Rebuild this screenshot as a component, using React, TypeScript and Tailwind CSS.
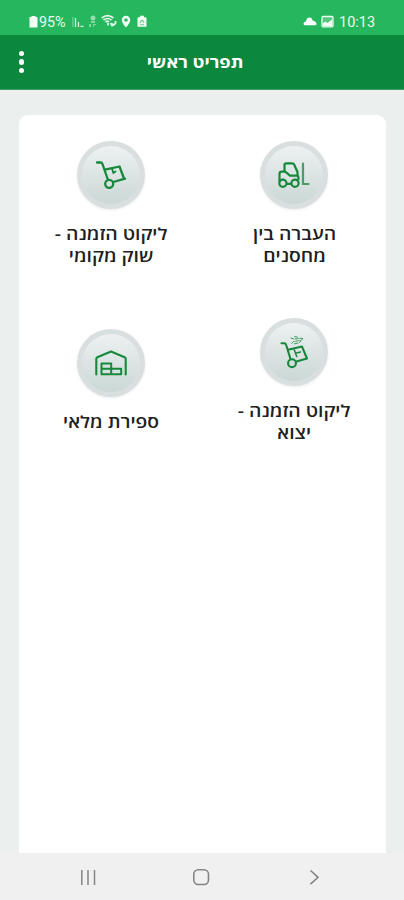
import React from "react";

const green = "#16883b";

function Forklift() {
  return (
    <svg width="58" height="58" viewBox="5 5 58 58" fill="none" stroke={green} strokeWidth="2.2" strokeLinejoin="round" strokeLinecap="round">
      <path d="M24.500 30.700V24q0-1.700 1.700-1.700h6q1.300 0 1.900 1.200L37.500 31v3.500M19.500 40v-7q0-2.300 2.300-2.300h3.400l4.800 4h6.500q1.900 0 1.900 1.900v2M27 42.800h4" />
      <circle cx="22.900" cy="42.300" r="3.600" />
      <circle cx="35" cy="42.300" r="3.600" />
      <path d="M43 22.500V43h5.500" stroke="#4c9c69" />
    </svg>
  );
}

function Dolly() {
  return (
    <svg width="58" height="58" viewBox="5 5 58 58" fill="none" stroke={green} strokeWidth="2.3" strokeLinejoin="round" strokeLinecap="round">
      <path d="M20 21.500h3.500q1.500 0 2 1.500L31 39" />
      <path d="M28 28.600L42.500 25.500 47 37.500M36.300 41L48 37.700" />
      <path d="M35 27.500l1.300 4.500 2.200-1.500" strokeWidth="1.800" />
      <circle cx="32.200" cy="42.800" r="4" />
    </svg>
  );
}

function ExportDolly() {
  return (
    <svg width="58" height="58" viewBox="5 5 58 58" fill="none" stroke={green} strokeWidth="2.1" strokeLinejoin="round" strokeLinecap="round">
      <path d="M21.500 25.300h2.700q1.500 0 1.900 1.500L30.500 41" />
      <path d="M28 31.800L42 28.600 47 40.500 36.500 43.500" />
      <path d="M34 31l1.500 4.300 5-1.300M35.500 35.300l1.200 3.200" strokeWidth="1.500" />
      <circle cx="32" cy="45.200" r="3.900" />
      <path d="M31 20l3.500 1.200 6-1 2.800.3-2 1.600-8 1.700-1.800 1.700M34.500 18.700l4 .5M34.500 25.800l4-.8 2-1.500" strokeWidth="1" strokeDasharray="3 1.500" opacity=".8" />
    </svg>
  );
}

function Warehouse() {
  return (
    <svg width="58" height="58" viewBox="5 5 58 58" fill="none" stroke={green} strokeWidth="2.1" strokeLinejoin="round" strokeLinecap="round">
      <path d="M19.300 45.500V30q0-1.200 1.100-1.700L34 22.500l13.600 5.800q1.100.5 1.100 1.700v15.500" />
      <path d="M24.500 34.500h9.700v5.300h-9.700zM24.500 39.800h19.700v5.400H24.500zM34.200 39.800v5.400" strokeWidth="2" />
    </svg>
  );
}

function Tile({ icon, lines }: { icon: React.ReactNode; lines: string[] }) {
  return (
    <button className="flex flex-col items-center gap-[14px]">
      <span className="block size-[68px] rounded-full bg-[#d9dfde] p-[5px] shadow-[0_1px_3px_#00000014]">
        <span className="block size-[58px] rounded-full bg-linear-to-b from-[#edf1f1] to-[#cbd8d5]">{icon}</span>
      </span>
      <span className="block scale-x-[1.17] text-center text-[16.5px] leading-[22px] font-semibold text-[#202020]">
        {lines.map((line) => (
          <span key={line} className="block whitespace-nowrap">{line}</span>
        ))}
      </span>
    </button>
  );
}

function StatusBar() {
  return (
    <div className="flex h-[35px] shrink-0 items-center bg-[#25b65e] pt-[7px] pr-[28px] pl-[29px] font-['Roboto',sans-serif] text-white">
      <svg width="9" height="13" viewBox="0 0 9 13" fill="#f3fff5"><path d="M2.500 1h4v1H8.500v10.500H.5V2h2z" /></svg>
      <span className="mt-[2px] ml-px w-[28px] text-[14.3px] leading-[14px] text-[#e9fbee]">95%</span>
      <svg className="ml-[5px]" width="12" height="13" viewBox="0 0 12 13" stroke="#d5f5de" strokeWidth="1.3"><path d="M.8 2v10" opacity=".4" /><path d="M3.500 3v9M6.500 7v5M8.500 11.300h3" /></svg>
      <svg className="ml-[4px]" width="9" height="13" viewBox="0 0 9 13" fill="#c3efcf"><circle cx="5" cy="3" r="2.500" opacity=".7" /><path d="M3 6h4v2H3zM1 9h2v3H1zM5 9h3v1H6v2H5z" opacity=".6" /></svg>
      <svg className="ml-[4px]" width="16" height="14" viewBox="0 0 16 14" fill="none" stroke="#e5fae9" strokeWidth="1.7"><path d="M.7 4Q6.500-.8 12.500 4M2.500 6Q6.500 3 10.500 6M4.500 8Q6.500 6.500 8 8" /><path d="M7 9v2.500M9.500 9l1.500 2.500 1-2M12 11.500l2.500-2.200V7" /></svg>
      <svg className="ml-[4px]" width="10" height="13" viewBox="0 0 10 13" fill="#f3fff5" fillRule="evenodd"><path d="M5 .8A4.200 4.200 0 0 0 .8 5C.8 8 5 12.500 5 12.500S9.200 8 9.200 5A4.200 4.200 0 0 0 5 .8zM5 3.200a1.800 1.800 0 1 1 0 3.600 1.800 1.800 0 0 1 0-3.600z" /></svg>
      <svg className="ml-[6px]" width="10" height="13" viewBox="0 0 10 13"><path d="M3 .8h4v1.500h1.500q1 0 1 1v8.500H.5V3.300q0-1 1-1H3z" fill="#effdf2" /><path d="M3 8l1.300-2.500h1.400L7 8M3 9.800h4" fill="none" stroke="#63c887" strokeWidth="1.1" /></svg>
      <svg className="ml-auto" width="14" height="10" viewBox="0 0 14 10" fill="#fff"><path d="M1.800 9.300Q.5 9 .5 7.500.7 5.500 3 5.500 3.500 1.500 6.500 1.500 9 1.500 9.500 4.500 13.300 5 13.500 8q0 1.300-1.300 1.300z" /></svg>
      <svg className="ml-[4px]" width="13" height="13" viewBox="0 0 13 13"><rect x="1" y="1.500" width="11" height="10.300" rx="1" fill="#55c67d" stroke="#effdf2" strokeWidth="1.300" /><path d="M2 10V8l2.500-1.500 2 1.500L11 4.500V11H2z" fill="#effdf2" /></svg>
      <span className="mt-[3px] ml-[5px] w-[37px] text-[14.5px] leading-[14px] whitespace-nowrap text-[#e9fbee]">10:13</span>
    </div>
  );
}

export default function App() {
  return (
    <main className="flex h-[900px] w-[404px] flex-col overflow-hidden bg-[#ebf0ef] font-['Open_Sans','Noto_Sans','DejaVu_Sans',sans-serif]">
      <StatusBar />
      <header className="grid h-[55px] shrink-0 grid-cols-[1fr_auto_1fr] items-center border-b border-[#3d9c60] bg-[#0b873e] pr-[14px] text-white">
        <button className="flex w-[43px] flex-col items-center gap-[3.2px]" aria-label="תפריט">
          <span className="size-[5.2px] rounded-full bg-white" />
          <span className="size-[5.2px] rounded-full bg-white" />
          <span className="size-[5.2px] rounded-full bg-white" />
        </button>
        <h1 dir="rtl" className="scale-x-[1.12] text-[16.3px] leading-6 font-bold whitespace-nowrap">תפריט ראשי</h1>
        <span />
      </header>
      <section dir="rtl" className="mt-[25px] mr-[18px] ml-[19px] grid flex-1 grid-cols-2 content-start items-center gap-y-[51px] rounded-t-[9px] bg-white pt-[26px]">
        <Tile icon={<Forklift />} lines={["העברה בין", "מחסנים"]} />
        <Tile icon={<Dolly />} lines={["ליקוט הזמנה -", "שוק מקומי"]} />
        <Tile icon={<ExportDolly />} lines={["ליקוט הזמנה -", "יצוא"]} />
        <Tile icon={<Warehouse />} lines={["ספירת מלאי"]} />
      </section>
      <nav className="flex h-[47px] shrink-0 items-center justify-between bg-[#f0f0f0] pr-[81px] pl-[80px]">
        <svg width="16" height="18" viewBox="0 0 16 18" stroke="#858585" strokeWidth="1.500"><path d="M1.800 2v15M8 2v15M14.500 2v15" /></svg>
        <svg width="18" height="18" viewBox="0 0 18 18" fill="none" stroke="#858585" strokeWidth="1.600"><rect x="1.800" y="1.800" width="14.700" height="14.700" rx="4.500" /></svg>
        <svg width="18" height="18" viewBox="0 0 18 18" fill="none" stroke="#858585" strokeWidth="1.600"><path d="M5.500 2.500L13 9.300l-7.500 6.900" /></svg>
      </nav>
    </main>
  );
}
